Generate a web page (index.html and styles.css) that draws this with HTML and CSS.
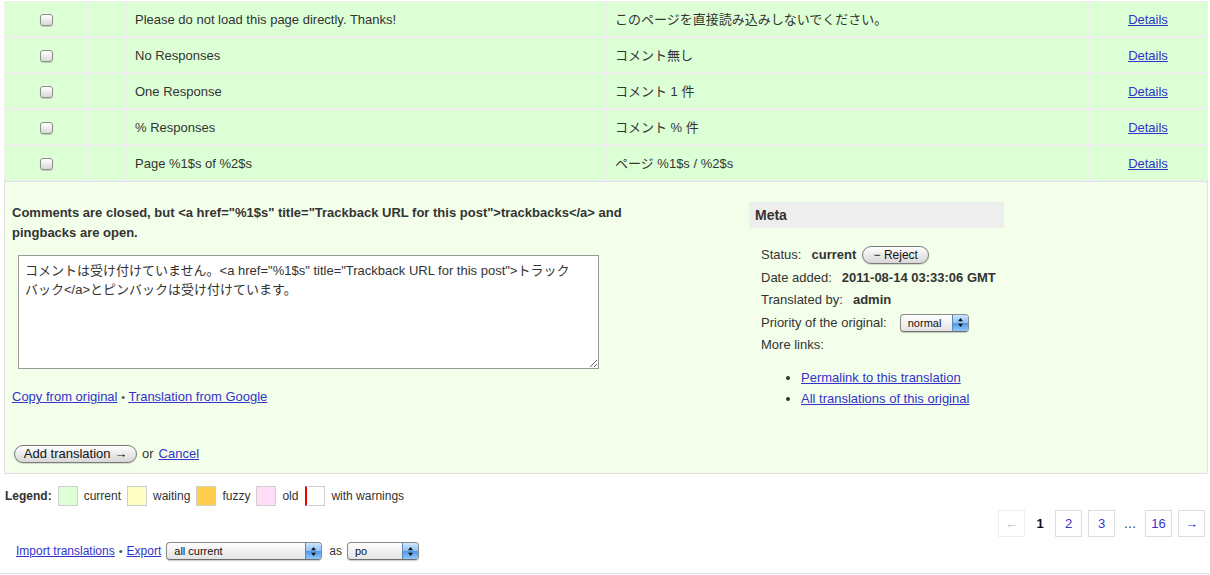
FILE: index.html
```html
<!DOCTYPE html>
<html lang="ja">
<head>
<meta charset="utf-8">
<title>Translations</title>
<link rel="stylesheet" href="styles.css">
</head>
<body>
<table class="translations">
  <colgroup>
    <col class="c-check"><col class="c-prio"><col class="c-orig"><col class="c-trans"><col class="c-act">
  </colgroup>
  <tbody>
    <tr class="preview">
      <td class="check"><input type="checkbox" class="cb"></td>
      <td></td>
      <td>Please do not load this page directly. Thanks!</td>
      <td>このページを直接読み込みしないでください。</td>
      <td class="actions"><a href="#">Details</a></td>
    </tr>
    <tr class="preview">
      <td class="check"><input type="checkbox" class="cb"></td>
      <td></td>
      <td>No Responses</td>
      <td>コメント無し</td>
      <td class="actions"><a href="#">Details</a></td>
    </tr>
    <tr class="preview">
      <td class="check"><input type="checkbox" class="cb"></td>
      <td></td>
      <td>One Response</td>
      <td>コメント 1 件</td>
      <td class="actions"><a href="#">Details</a></td>
    </tr>
    <tr class="preview">
      <td class="check"><input type="checkbox" class="cb"></td>
      <td></td>
      <td>% Responses</td>
      <td>コメント % 件</td>
      <td class="actions"><a href="#">Details</a></td>
    </tr>
    <tr class="preview">
      <td class="check"><input type="checkbox" class="cb"></td>
      <td></td>
      <td>Page %1$s of %2$s</td>
      <td>ページ %1$s / %2$s</td>
      <td class="actions"><a href="#">Details</a></td>
    </tr>
    <tr class="editor">
      <td colspan="5">
        <div class="editor-inner">
          <div class="strings">
            <p class="original">Comments are closed, but &lt;a href="%1$s" title="Trackback URL for this post"&gt;trackbacks&lt;/a&gt; and pingbacks are open.</p>
            <textarea class="textarea">コメントは受け付けていません。&lt;a href="%1$s" title="Trackback URL for this post"&gt;トラックバック&lt;/a&gt;とピンバックは受け付けています。</textarea>
            <p class="copy-links"><a href="#">Copy from original</a> <span class="sep">&bull;</span> <a href="#">Translation from Google</a></p>
            <div class="actions-row">
              <button class="pill add-btn" type="button">Add translation &rarr;</button>
              <span class="or">or</span>
              <a href="#">Cancel</a>
            </div>
          </div>
          <div class="meta">
            <h3 class="meta-title">Meta</h3>
            <div class="meta-list">
              <div class="meta-row"><span class="label">Status:</span><strong>current</strong><button class="pill reject-btn" type="button">&minus; Reject</button></div>
              <div class="meta-row"><span class="label">Date added:</span><strong>2011-08-14 03:33:06 GMT</strong></div>
              <div class="meta-row"><span class="label">Translated by:</span><strong>admin</strong></div>
              <div class="meta-row"><span class="label">Priority of the original:</span>
                <span class="select select-priority"><span class="select-text">normal</span><span class="select-arrows"><svg width="7" height="11" viewBox="0 0 7 11"><path d="M3.5 1 L6 4.2 H1 Z M3.5 10 L6 6.8 H1 Z" fill="#111"/></svg></span></span>
              </div>
              <div class="meta-row"><span class="label">More links:</span></div>
            </div>
            <ul class="more-links">
              <li><a href="#">Permalink to this translation</a></li>
              <li><a href="#">All translations of this original</a></li>
            </ul>
          </div>
        </div>
      </td>
    </tr>
  </tbody>
</table>

<div class="legend">
  <strong>Legend:</strong>
  <span class="swatch s-current"></span><span>current</span>
  <span class="swatch s-waiting"></span><span>waiting</span>
  <span class="swatch s-fuzzy"></span><span>fuzzy</span>
  <span class="swatch s-old"></span><span>old</span>
  <span class="swatch s-warn"></span><span>with warnings</span>
</div>

<div class="paging">
  <span class="pbox disabled">&larr;</span>
  <span class="pcur">1</span>
  <a class="pbox" href="#">2</a>
  <a class="pbox" href="#">3</a>
  <span class="pdots">&hellip;</span>
  <a class="pbox" href="#">16</a>
  <a class="pbox" href="#">&rarr;</a>
</div>

<div class="export-row">
  <a href="#">Import translations</a>
  <span class="sep">&bull;</span>
  <a href="#">Export</a>
  <span class="select select-what"><span class="select-text">all current</span><span class="select-arrows"><svg width="7" height="11" viewBox="0 0 7 11"><path d="M3.5 1 L6 4.2 H1 Z M3.5 10 L6 6.8 H1 Z" fill="#111"/></svg></span></span>
  <span class="as">as</span>
  <span class="select select-format"><span class="select-text">po</span><span class="select-arrows"><svg width="7" height="11" viewBox="0 0 7 11"><path d="M3.5 1 L6 4.2 H1 Z M3.5 10 L6 6.8 H1 Z" fill="#111"/></svg></span></span>
</div>

<div class="footer-line"></div>
</body>
</html>
```

FILE: styles.css
```css
html, body {
  margin: 0;
  padding: 0;
  background: #fff;
}
body {
  font-family: "Liberation Sans", "Noto Sans CJK JP", sans-serif;
  font-size: 13px;
  color: #333;
}
a {
  color: #3333cc;
  text-decoration: underline;
}

.translations {
  margin: 1px 0 0 4px;
  width: 1204px;
  table-layout: fixed;
  border-collapse: separate;
  border-spacing: 0;
}
.c-check { width: 84px; }
.c-prio { width: 39px; }
.c-orig { width: 480px; }
.c-trans { width: 481px; }
.c-act { width: 120px; }

.translations td {
  border: 1px solid #eeeeee;
  padding: 1px 7px 0 7px;
  height: 33px;
  vertical-align: middle;
  line-height: 16px;
  font-size: 13px;
}
.preview td {
  background: #ddffd6;
}
.translations td.check {
  text-align: center;
  padding: 0;
  height: 34px;
}
.translations td.actions {
  text-align: center;
}
.cb {
  appearance: none;
  -webkit-appearance: none;
  width: 13px;
  height: 12px;
  margin: 0;
  border: 1px solid #8c8c8c;
  border-radius: 3px;
  background: linear-gradient(#ffffff, #d9d9d9);
  box-shadow: 0 1px 1px rgba(0,0,0,0.18);
  vertical-align: middle;
}

.translations .editor td {
  background: #f3ffea;
  border-color: #e2e2e2;
  padding: 20px 7px 10px 7px;
  vertical-align: top;
}
.editor-inner {
  display: flex;
  align-items: flex-start;
}
.strings {
  width: 630px;
}
.original {
  margin: 1px 0 0 0;
  font-size: 13px;
  font-weight: bold;
  line-height: 20px;
  color: #333;
}
.textarea {
  display: block;
  box-sizing: border-box;
  margin: 12px 0 0 6px;
  width: 581px;
  height: 114px;
  border: 1px solid #999;
  padding: 5px 18px 4px 6px;
  font-family: "Liberation Sans", "Noto Sans CJK JP", sans-serif;
  font-size: 13px;
  line-height: 19px;
  color: #333;
  background: #fff;
}
.copy-links {
  margin: 20px 0 0 0;
  font-size: 13px;
  line-height: 16px;
}
.sep {
  color: #555;
  font-size: 11px;
}
.actions-row {
  margin-top: 40px;
  margin-left: 2px;
  display: flex;
  align-items: center;
  gap: 5px;
  font-size: 13px;
  height: 18px;
}
.pill {
  box-sizing: border-box;
  height: 18px;
  border: 1px solid #7a7a7a;
  border-radius: 9px;
  background: linear-gradient(#ffffff, #e6e6e6 60%, #d8d8d8);
  box-shadow: 0 1px 1px rgba(0,0,0,0.15);
  font-family: "Liberation Sans", sans-serif;
  color: #111;
  padding: 0 6px;
  line-height: 16px;
  white-space: nowrap;
  cursor: pointer;
}
.add-btn {
  width: 123px;
  font-size: 13px;
}
.or {
  color: #333;
}

.meta {
  margin-left: 107px;
  width: 255px;
}
.meta-title {
  margin: 0;
  height: 26px;
  line-height: 26px;
  background: #eeeeee;
  padding-left: 6px;
  font-size: 14px;
  font-weight: bold;
  color: #333;
}
.meta-list {
  margin-top: 16px;
  padding-left: 12px;
  font-size: 13px;
}
.meta-row {
  display: flex;
  align-items: center;
  height: 22.5px;
  white-space: nowrap;
}
.meta-row .label {
  margin-right: 10px;
}
.reject-btn {
  margin-left: 6px;
  width: 67px;
  font-size: 12px;
}
.more-links {
  margin: 10px 0 0 0;
  padding-left: 52px;
  font-size: 13px;
  line-height: 21px;
}

.select {
  display: inline-flex;
  box-sizing: border-box;
  height: 18px;
  border: 1px solid #8a8a8a;
  border-bottom-color: #6e6e6e;
  border-radius: 4px;
  background: linear-gradient(#ffffff, #f0f0f0 55%, #e4e4e4);
  box-shadow: 0 1px 1px rgba(0,0,0,0.2);
  overflow: hidden;
  font-size: 11px;
  color: #111;
  vertical-align: middle;
}
.select-text {
  flex: 1;
  padding-left: 7px;
  line-height: 16px;
}
.select-arrows {
  width: 15px;
  display: flex;
  align-items: center;
  justify-content: center;
  border-left: 1px solid #5f86b8;
  background: linear-gradient(#cfe6fd, #8cc0f4 50%, #4e97e6 51%, #8fc7fb);
}
.select-priority {
  width: 69px;
  margin-left: 3px;
}
.select-what {
  width: 156px;
  margin-left: 1px;
}
.select-format {
  width: 72px;
  margin-left: 1px;
}

.legend {
  margin: 12px 0 0 5px;
  display: flex;
  align-items: center;
  gap: 6px;
  font-size: 12px;
  height: 20px;
}
.legend strong {
  color: #333;
}
.swatch {
  box-sizing: border-box;
  width: 20px;
  height: 20px;
  border: 1px solid #cfcfcf;
}
.s-current { background: #ddffd6; }
.s-waiting { background: #ffffc4; }
.s-fuzzy { background: #ffcc4c; }
.s-old { background: #ffddf6; }
.s-warn { background: #fff; border-left: 2px solid #ee0000; margin-left: 1px; }

.paging {
  margin: 4px 5px 0 0;
  display: flex;
  justify-content: flex-end;
  align-items: center;
  gap: 6px;
  font-size: 13px;
}
.pbox {
  box-sizing: border-box;
  width: 27px;
  height: 27px;
  border: 1px solid #dddddd;
  line-height: 25px;
  text-align: center;
  color: #3333cc;
  text-decoration: none;
}
.pbox.disabled {
  border-color: #eeeeee;
  color: #bbbbbb;
}
.pcur {
  width: 18px;
  text-align: center;
  font-weight: bold;
  color: #111;
}
.pdots {
  width: 18px;
  text-align: center;
  color: #333;
}

.export-row {
  margin-top: 5px;
  padding-left: 16px;
  display: flex;
  align-items: center;
  height: 18px;
  font-size: 12px;
  gap: 4px;
}
.export-row .as {
  margin-left: 3px;
}
.footer-line {
  margin-top: 13px;
  border-top: 1px solid #dddddd;
}
```
